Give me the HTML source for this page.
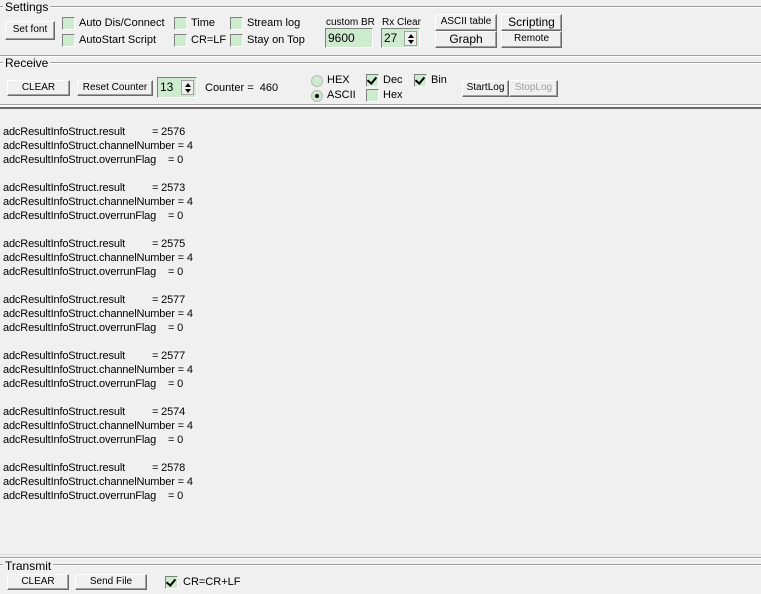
<!DOCTYPE html>
<html><head><meta charset="utf-8"><style>
*{margin:0;padding:0;box-sizing:border-box}
body{width:761px;height:594px;background:#f0f0f0;position:relative;overflow:hidden;font-family:"Liberation Sans",Arial,sans-serif;font-size:11px;color:#000}
.a{position:absolute;white-space:nowrap}
.hl{position:absolute;left:0;width:761px;height:1px}
.btn{position:absolute;background:#f0f0f0;border-top:1px solid #fff;border-left:1px solid #fff;border-right:1px solid #696969;border-bottom:1px solid #696969;box-shadow:inset -1px -1px 0 #a0a0a0;font-size:10px;text-align:center;white-space:nowrap}
.cb{position:absolute;width:13px;height:13px;background:#cdeccd;border-top:1px solid #808080;border-left:1px solid #808080;border-right:1px solid #fff;border-bottom:1px solid #fff}
.cb.c::after{content:"";position:absolute;left:2px;top:0px;width:4px;height:7px;border-right:2px solid #000;border-bottom:2px solid #000;transform:rotate(40deg)}
.rd{position:absolute;width:12px;height:12px;border-radius:50%;background:#cdeccd;border:1px solid #b8b8b8}
.rd.c::after{content:"";position:absolute;left:3px;top:3px;width:4px;height:4px;border-radius:50%;background:#000}
.in{position:absolute;background:#cdeccd;border-top:1px solid #808080;border-left:1px solid #808080;border-right:1px solid #fff;border-bottom:1px solid #fff;font-size:12px;padding-left:2px}
.sp{position:absolute;right:2px;top:2px;width:13px;height:15px;background:#f0f0f0;border:1px solid #a0a0a0}
.sp::before{content:"";position:absolute;left:3px;top:2px;border-left:3px solid transparent;border-right:3px solid transparent;border-bottom:4px solid #000}
.sp::after{content:"";position:absolute;left:3px;top:8px;border-left:3px solid transparent;border-right:3px solid transparent;border-top:4px solid #000}
.t{position:absolute;left:3px;font-size:11px;letter-spacing:-0.15px;line-height:14px;white-space:nowrap}
.g{font-size:12px}
</style></head><body>
<div class="hl" style="top:6px;background:#a0a0a0"></div><div class="hl" style="top:7px;background:#fff"></div>
<div class="a g" style="left:3px;top:1px;padding:0 2px;background:#f0f0f0;line-height:13px">Settings</div>
<div class="btn" style="left:5px;top:21px;width:50px;height:19px;line-height:16px">Set font</div>
<div class="cb" style="left:62px;top:17px"></div><div class="a" style="left:79px;top:17px">Auto Dis/Connect</div>
<div class="cb" style="left:62px;top:34px"></div><div class="a" style="left:79px;top:34px">AutoStart Script</div>
<div class="cb" style="left:174px;top:17px"></div><div class="a" style="left:191px;top:17px">Time</div>
<div class="cb" style="left:174px;top:34px"></div><div class="a" style="left:191px;top:34px">CR=LF</div>
<div class="cb" style="left:230px;top:17px"></div><div class="a" style="left:247px;top:17px">Stream log</div>
<div class="cb" style="left:230px;top:34px"></div><div class="a" style="left:247px;top:34px">Stay on Top</div>
<div class="a" style="left:326px;top:17px;font-size:10px">custom BR</div>
<div class="in" style="left:325px;top:28px;width:48px;height:20px;line-height:18px">9600</div>
<div class="a" style="left:382px;top:17px;font-size:10px">Rx Clear</div>
<div class="in" style="left:381px;top:28px;width:39px;height:20px;line-height:18px">27<div class="sp" style="top:2px"></div></div>
<div class="btn" style="left:435px;top:14px;width:62px;height:17px;line-height:14px">ASCII table</div>
<div class="btn" style="left:435px;top:31px;width:62px;height:17px;line-height:14px;font-size:12px">Graph</div>
<div class="btn" style="left:501px;top:14px;width:61px;height:17px;line-height:14px;font-size:12px">Scripting</div>
<div class="btn" style="left:501px;top:31px;width:61px;height:17px;line-height:14px">Remote</div>
<div class="hl" style="top:55px;background:#a0a0a0"></div><div class="hl" style="top:56px;background:#fff"></div>
<div class="hl" style="top:62px;background:#a0a0a0"></div><div class="hl" style="top:63px;background:#fff"></div>
<div class="a g" style="left:3px;top:57px;padding:0 2px;background:#f0f0f0;line-height:13px">Receive</div>
<div class="btn" style="left:7px;top:80px;width:63px;height:16px;line-height:13px">CLEAR</div>
<div class="btn" style="left:77px;top:80px;width:76px;height:16px;line-height:13px">Reset Counter</div>
<div class="in" style="left:157px;top:77px;width:40px;height:21px;line-height:19px">13<div class="sp"></div></div>
<div class="a" style="left:205px;top:82px">Counter =&nbsp; 460</div>
<div class="rd" style="left:311px;top:75px"></div><div class="a" style="left:327px;top:74px">HEX</div>
<div class="rd c" style="left:311px;top:90px"></div><div class="a" style="left:327px;top:89px">ASCII</div>
<div class="cb c" style="left:366px;top:74px"></div><div class="a" style="left:383px;top:74px">Dec</div>
<div class="cb" style="left:366px;top:89px"></div><div class="a" style="left:383px;top:89px">Hex</div>
<div class="cb c" style="left:414px;top:74px"></div><div class="a" style="left:431px;top:74px">Bin</div>
<div class="btn" style="left:462px;top:80px;width:47px;height:17px;line-height:14px">StartLog</div>
<div class="btn" style="left:509px;top:80px;width:49px;height:17px;line-height:14px;color:#a0a0a0">StopLog</div>
<div class="hl" style="top:104px;background:#a0a0a0"></div><div class="hl" style="top:105px;background:#fff"></div>
<div class="hl" style="top:107px;height:2px;background:#696969"></div>
<div class="t" style="top:125px">adcResultInfoStruct.result<span style="position:absolute;left:149px">= 2576</span><br>adcResultInfoStruct.channelNumber = 4<br>adcResultInfoStruct.overrunFlag<span style="position:absolute;left:165px;top:28px">= 0</span></div>
<div class="t" style="top:181px">adcResultInfoStruct.result<span style="position:absolute;left:149px">= 2573</span><br>adcResultInfoStruct.channelNumber = 4<br>adcResultInfoStruct.overrunFlag<span style="position:absolute;left:165px;top:28px">= 0</span></div>
<div class="t" style="top:237px">adcResultInfoStruct.result<span style="position:absolute;left:149px">= 2575</span><br>adcResultInfoStruct.channelNumber = 4<br>adcResultInfoStruct.overrunFlag<span style="position:absolute;left:165px;top:28px">= 0</span></div>
<div class="t" style="top:293px">adcResultInfoStruct.result<span style="position:absolute;left:149px">= 2577</span><br>adcResultInfoStruct.channelNumber = 4<br>adcResultInfoStruct.overrunFlag<span style="position:absolute;left:165px;top:28px">= 0</span></div>
<div class="t" style="top:349px">adcResultInfoStruct.result<span style="position:absolute;left:149px">= 2577</span><br>adcResultInfoStruct.channelNumber = 4<br>adcResultInfoStruct.overrunFlag<span style="position:absolute;left:165px;top:28px">= 0</span></div>
<div class="t" style="top:405px">adcResultInfoStruct.result<span style="position:absolute;left:149px">= 2574</span><br>adcResultInfoStruct.channelNumber = 4<br>adcResultInfoStruct.overrunFlag<span style="position:absolute;left:165px;top:28px">= 0</span></div>
<div class="t" style="top:461px">adcResultInfoStruct.result<span style="position:absolute;left:149px">= 2578</span><br>adcResultInfoStruct.channelNumber = 4<br>adcResultInfoStruct.overrunFlag<span style="position:absolute;left:165px;top:28px">= 0</span></div>
<div class="hl" style="top:554px;background:#dcdcdc"></div>
<div class="hl" style="top:557px;background:#a0a0a0"></div><div class="hl" style="top:558px;background:#fff"></div>
<div class="hl" style="top:564px;background:#a0a0a0"></div><div class="hl" style="top:565px;background:#fff"></div>
<div class="a g" style="left:3px;top:560px;padding:0 2px;background:#f0f0f0;line-height:13px">Transmit</div>
<div class="btn" style="left:7px;top:574px;width:62px;height:16px;line-height:13px">CLEAR</div>
<div class="btn" style="left:75px;top:574px;width:72px;height:16px;line-height:13px">Send File</div>
<div class="cb c" style="left:165px;top:576px"></div><div class="a" style="left:183px;top:576px">CR=CR+LF</div>
</body></html>
